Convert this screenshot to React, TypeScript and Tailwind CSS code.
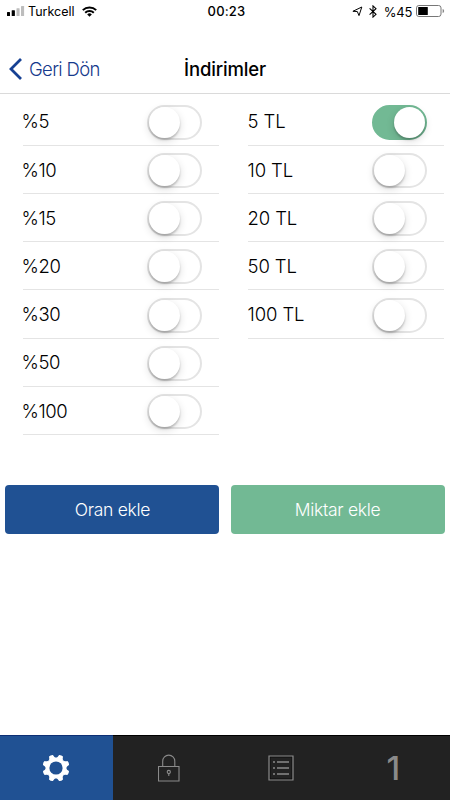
import { useState } from "react";
import clsx from "clsx";

type Discount = { label: string; active: boolean };

const RATES: Discount[] = ["%5", "%10", "%15", "%20", "%30", "%50", "%100"].map((label) => ({
  label,
  active: false,
}));

const AMOUNTS: Discount[] = ["5 TL", "10 TL", "20 TL", "50 TL", "100 TL"].map((label) => ({
  label,
  active: label === "5 TL",
}));

function StatusBar() {
  return (
    <div className="grid h-6 grid-cols-3 items-center text-[13px] leading-6 text-black">
      <div className="flex h-6 items-center pl-[7px]">
        <svg className="-mt-[2px]" width="18" height="10" viewBox="0 0 18 10">
          <rect x="0" y="6" width="3" height="4" rx="0.5" />
          <rect x="4.7" y="4.3" width="3.2" height="5.7" rx="0.5" />
          <rect x="9.5" y="2.2" width="3.1" height="7.8" rx="0.5" fill="#bdbdbd" />
          <rect x="14" y="0" width="3.1" height="10" rx="0.5" fill="#bdbdbd" />
        </svg>
        <span className="-mt-px ml-[3px] text-[12.5px]">Turkcell</span>
        <svg className="-mt-[2px] ml-[7px]" width="15" height="11" viewBox="0 0 15 11" fill="none" stroke="#000" strokeWidth="2">
          <path d="M0.8 4.1a9.6 9.6 0 0 1 13.4 0" />
          <path d="M3.2 6.7a6.2 6.2 0 0 1 8.6 0" />
          <path d="M7.5 10.8 5.2 8.4a3.3 3.3 0 0 1 4.6 0z" fill="#000" stroke="none" />
        </svg>
      </div>
      <span className="-mt-[2px] pl-[3px] text-center font-medium tracking-[0.2px]">00:23</span>
      <div className="-mt-px flex h-6 items-center justify-end pr-[5px]">
        <svg width="11" height="11" viewBox="0 0 11 11" fill="none" stroke="#000" strokeWidth="1">
          <path d="M9.8 1 0.9 5.3l4.4 0.2L7 9.6z" />
        </svg>
        <svg className="ml-[6px]" width="8" height="13" viewBox="0 0 8 13" fill="none" stroke="#000" strokeWidth="1.1">
          <path d="M0.6 3.3 7 9.3 4 12.1V0.9L7 3.7 0.6 9.7" />
        </svg>
        <span className="ml-[7px] text-[13px] tracking-[-0.3px]">%45</span>
        <svg className="-mt-px ml-[4px]" width="29" height="12" viewBox="0 0 29 12">
          <rect x="0.5" y="0.5" width="24.5" height="11" rx="2.4" fill="none" stroke="#777" />
          <rect x="2.2" y="2" width="9.6" height="8" rx="0.5" />
          <path d="M26.6 4v4c1-.3 1.5-1.1 1.5-2s-.5-1.7-1.5-2z" fill="#888" />
        </svg>
      </div>
    </div>
  );
}

function Header() {
  return (
    <header className="grid h-[70px] grid-cols-3 items-center border-b border-[#dadada] pt-5">
      <button className="flex items-center pl-[9px] text-left text-[18.5px] leading-6 font-light tracking-[-0.65px] text-[#163a8c]">
        <svg width="13" height="22" viewBox="0 0 13 22" fill="none" stroke="#164193" strokeWidth="2.8">
          <path d="M12 1 2 11l10 10" />
        </svg>
        <span className="ml-[7px] whitespace-nowrap">Geri Dön</span>
      </button>
      <h1 className="text-center text-[18.5px] leading-6 font-medium tracking-[-0.15px] text-black">İndirimler</h1>
    </header>
  );
}

function Toggle({ checked, onChange }: { checked: boolean; onChange: () => void }) {
  return (
    <button
      role="switch"
      aria-checked={checked}
      onClick={onChange}
      className={clsx(
        "flex h-[35px] w-[55px] items-center rounded-full border-2",
        checked ? "justify-end border-[#72b994] bg-[#72b994]" : "justify-start border-[#e4e4e4] bg-white"
      )}
    >
      <span className="size-[31px] rounded-full bg-white shadow-[0_2px_2px_rgba(0,0,0,0.2),0_3px_9px_rgba(0,0,0,0.14)]" />
    </button>
  );
}

function DiscountList({ initial, labelClass }: { initial: Discount[]; labelClass: string }) {
  const [items, setItems] = useState(initial);

  const toggle = (label: string) =>
    setItems(items.map((item) => (item.label === label ? { ...item, active: !item.active } : item)));

  return (
    <ul className="pr-[5.6px] pl-[22.5px]">
      {items.map((item) => (
        <li
          key={item.label}
          className="flex h-[48.2px] items-center justify-between border-b border-[#e4e4e4] pt-[2px] pr-[17.4px] text-[18.5px] font-light text-black"
        >
          <span className={labelClass}>{item.label}</span>
          <Toggle checked={item.active} onChange={() => toggle(item.label)} />
        </li>
      ))}
    </ul>
  );
}

function TabBar() {
  return (
    <nav className="grid h-[65px] grid-cols-4 bg-[#222] text-[#8a8a8a]">
      <button className="flex items-center justify-center border-t border-[#0d2f74] bg-[#205193]">
        <svg width="28" height="28" viewBox="-14 -14 28 28" fill="#fff">
          {[22.5, 67.5, 112.5, 157.5, 202.5, 247.5, 292.5, 337.5].map((angle) => (
            <path
              key={angle}
              d="M-4.2-9.2Q-2.4-10.4-2.1-13.2Q0-14.2 2.1-13.2Q2.4-10.4 4.2-9.2z"
              transform={`rotate(${angle})`}
            />
          ))}
          <circle r="10.2" />
          <circle r="6.6" fill="#205193" />
        </svg>
      </button>
      <button className="flex items-center justify-center border-t border-black">
        <svg className="-mt-px" width="22" height="28" viewBox="0 0 22 28" fill="none" stroke="currentColor" strokeWidth="1.1">
          <path d="M0.5 12.5h20.5v14.5H0.5z" />
          <path d="M4.7 12.5V7.2a6 6 0 0 1 12.1 0v5.3" />
          <circle cx="10.8" cy="18" r="1.6" />
          <path d="M10.8 19.6V22" />
        </svg>
      </button>
      <button className="flex items-center justify-center border-t border-black">
        <svg className="-mt-px" width="26" height="26" viewBox="0 0 26 26" fill="none" stroke="currentColor">
          <path d="M2 2h22v22H2z" stroke="#0c0c0c" />
          <path d="M1 1h24v24H1z" strokeWidth="1.2" />
          <path d="M5 7h2M5 13h2M5 19h2M9 7h12M9 13h12M9 19h12" strokeWidth="1.5" />
        </svg>
      </button>
      <button className="flex items-center justify-center border-t border-black pr-px text-[33px] leading-none font-medium">
        1
      </button>
    </nav>
  );
}

export default function App() {
  return (
    <div className="flex h-screen w-full flex-col overflow-hidden bg-white font-[Inter,sans-serif]">
      <StatusBar />
      <Header />
      <main className="flex-1 pt-[3.7px]">
        <div className="grid h-[387.5px] grid-cols-2">
          <DiscountList initial={RATES} labelClass="-ml-px tracking-[-0.4px]" />
          <DiscountList initial={AMOUNTS} labelClass="tracking-[-0.1px]" />
        </div>
        <div className="grid grid-cols-2 gap-[11.2px] px-[5.4px] text-[17.5px] font-light tracking-[-0.3px] text-white">
          <button className="h-[48.5px] rounded bg-[#205193] pt-px">Oran ekle</button>
          <button className="h-[48.5px] rounded bg-[#72b994] pt-px">Miktar ekle</button>
        </div>
      </main>
      <TabBar />
    </div>
  );
}
